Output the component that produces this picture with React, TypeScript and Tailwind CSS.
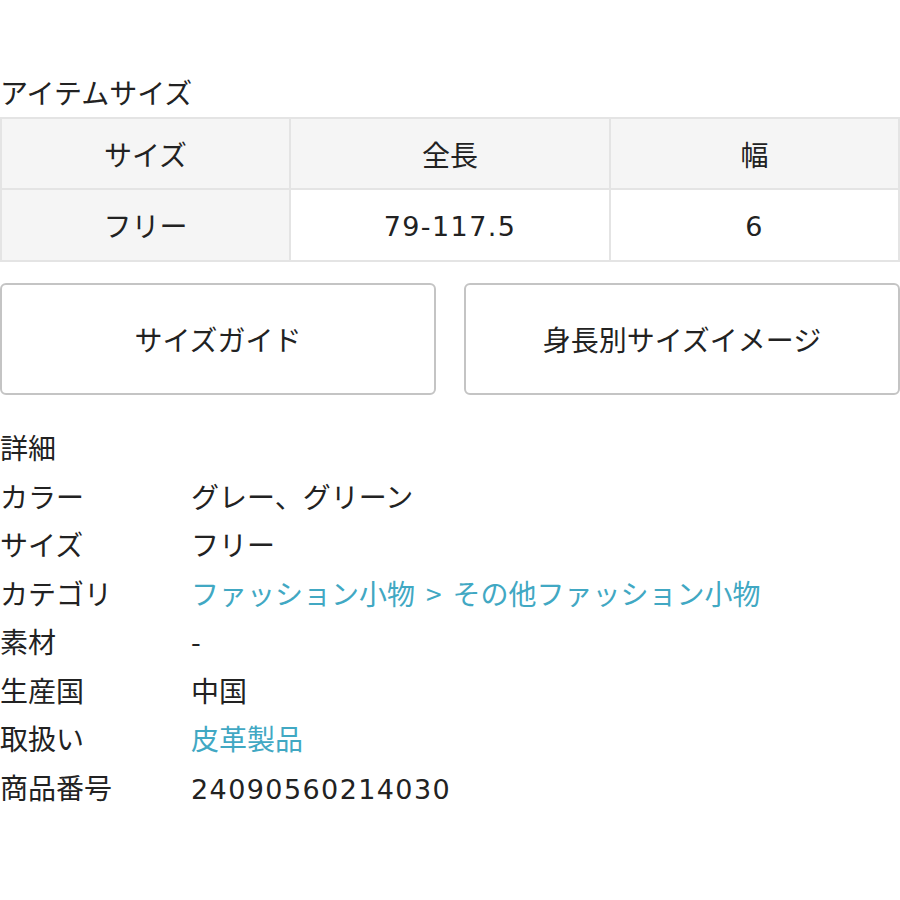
import React from "react";

const rows: { label: string; value: React.ReactNode; link?: boolean }[] = [
  { label: "カラー", value: "グレー、グリーン" },
  { label: "サイズ", value: "フリー" },
  {
    label: "カテゴリ",
    value: (
      <>
        ファッション小物<span className="mx-[11px]">&gt;</span>その他ファッション小物
      </>
    ),
    link: true,
  },
  { label: "素材", value: "-" },
  { label: "生産国", value: "中国" },
  { label: "取扱い", value: "皮革製品", link: true },
  {
    label: "商品番号",
    value: <span className="font-['DejaVu_Sans'] text-[27px] tracking-[1.4px]">24090560214030</span>,
  },
];

const num = "font-['DejaVu_Sans'] text-[27px] tracking-[1.4px]";

export default function App() {
  return (
    <div
      className="w-[900px] h-[900px] bg-white text-[#222] text-[28px] pt-[72px]"
      style={{ fontFamily: '"Noto Sans CJK JP", "Noto Sans", sans-serif' }}
    >
      <h2 className="leading-[40px] font-normal mb-[5px]">アイテムサイズ</h2>

      <table className="w-full border-collapse text-center">
        <tbody>
          <tr className="h-[71px]">
            <td className="w-[289px] border-2 border-[#e4e4e4] bg-[#f5f5f5]">サイズ</td>
            <td className="w-[320px] border-2 border-[#e4e4e4] bg-[#f5f5f5]">全長</td>
            <td className="border-2 border-[#e4e4e4] bg-[#f5f5f5]">幅</td>
          </tr>
          <tr className="h-[72px]">
            <td className="border-2 border-[#e4e4e4] bg-[#f5f5f5]">フリー</td>
            <td className="border-2 border-[#e4e4e4]">
              <span className={num}>79-117.5</span>
            </td>
            <td className="border-2 border-[#e4e4e4]">
              <span className={num}>6</span>
            </td>
          </tr>
        </tbody>
      </table>

      <div className="grid grid-cols-2 gap-[28px] mt-[21px]">
        <button className="h-[112px] border-2 border-[#c4c4c4] rounded-[6px] bg-white">
          サイズガイド
        </button>
        <button className="h-[112px] border-2 border-[#c4c4c4] rounded-[6px] bg-white">
          身長別サイズイメージ
        </button>
      </div>

      <div className="mt-[28px] leading-[48.5px]">
        <div>詳細</div>
        {rows.map((r) => (
          <div key={r.label} className="flex">
            <div className="w-[191px] shrink-0">{r.label}</div>
            <div className={r.link ? "text-[#41a8c3]" : ""}>{r.value}</div>
          </div>
        ))}
      </div>
    </div>
  );
}
